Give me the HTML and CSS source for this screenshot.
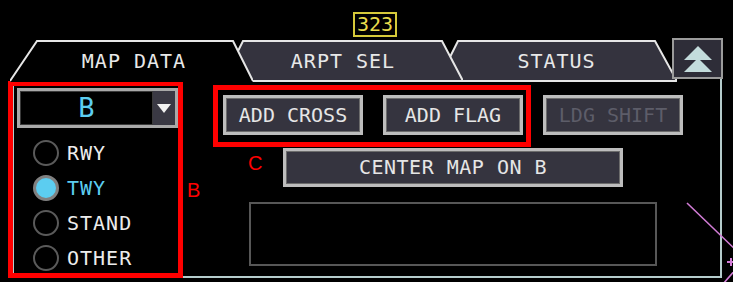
FILE: index.html
```html
<!DOCTYPE html>
<html lang="en">
<head>
<meta charset="utf-8">
<title>Map Data</title>
<link rel="stylesheet" href="styles.css">
</head>
<body>
<div class="screen">
  <div class="topbar"><span class="alt">323</span></div>

  <div class="tabbar">
    <div class="tab tab-active">
      <svg class="tab-shape" viewBox="0 0 243 42" preserveAspectRatio="none"><polygon points="0,42 27,1 223,1 243,42" fill="#000"/><polyline points="0,41 27,1 223,1 243,41" fill="none" stroke="#e6e6e6" stroke-width="2"/></svg>
      <span class="tab-label">MAP DATA</span>
    </div>
    <div class="tab tab-2">
      <svg class="tab-shape" viewBox="0 0 240 42" preserveAspectRatio="none"><polygon points="0,41 20,1 219,1 240,41" fill="#34333e" stroke="#e6e6e6" stroke-width="2"/></svg>
      <span class="tab-label">ARPT SEL</span>
    </div>
    <div class="tab tab-3">
      <svg class="tab-shape" viewBox="0 0 239 42" preserveAspectRatio="none"><polygon points="0,41 20,1 217,1 239,41" fill="#34333e" stroke="#e6e6e6" stroke-width="2"/></svg>
      <span class="tab-label">STATUS</span>
    </div>
    <div class="collapse">
      <svg width="28" height="26" viewBox="0 0 28 26"><polygon points="14,0 28,14 0,14" fill="#c3dcdc"/><polygon points="14,12 28,26 0,26" fill="#c3dcdc"/></svg>
    </div>
  </div>

  <div class="panel">
    <div class="left">
      <div class="dropdown">
        <div class="dd-value">B</div>
        <div class="dd-arrow"><span class="caret"></span></div>
      </div>
      <ul class="radios">
        <li class="radio"><span class="dot"></span><span class="radio-label">RWY</span></li>
        <li class="radio radio-on"><span class="dot"></span><span class="radio-label">TWY</span></li>
        <li class="radio"><span class="dot"></span><span class="radio-label">STAND</span></li>
        <li class="radio"><span class="dot"></span><span class="radio-label">OTHER</span></li>
      </ul>
    </div>
    <div class="right">
      <div class="btn-row">
        <div class="btn">ADD CROSS</div>
        <div class="btn">ADD FLAG</div>
        <div class="btn btn-disabled">LDG SHIFT</div>
      </div>
      <div class="btn btn-wide">CENTER MAP ON B</div>
      <div class="msgbox"></div>
    </div>
  </div>

  <svg class="map-overlay" width="733" height="282" viewBox="0 0 733 282">
    <line x1="687" y1="203" x2="740" y2="254" stroke="#d27cd6" stroke-width="1.6"/>
    <line x1="727" y1="262" x2="735" y2="262" stroke="#d27cd6" stroke-width="2"/>
    <line x1="731" y1="258" x2="731" y2="266" stroke="#d27cd6" stroke-width="2"/>
    <line x1="736" y1="269" x2="723" y2="284" stroke="#d27cd6" stroke-width="1.6"/>
  </svg>

  <div class="anno-box anno-a"></div>
  <div class="anno-box anno-b"></div>
  <div class="anno-box anno-c"></div>
  <span class="anno-label label-a">A</span>
  <span class="anno-label label-b">B</span>
  <span class="anno-label label-c">C</span>
</div>
</body>
</html>
```
FILE: styles.css
```css
html, body {
  margin: 0;
  padding: 0;
  background: #000;
}

.screen {
  position: relative;
  width: 733px;
  height: 282px;
  overflow: hidden;
  background: #000;
  font-family: "DejaVu Sans Mono", "Liberation Mono", monospace;
  color: #e6e6e6;
}

/* top altitude box */
.topbar {
  height: 38px;
  box-sizing: border-box;
  padding: 12px 0 0 353px;
}

.alt {
  display: block;
  width: 44px;
  height: 25px;
  box-sizing: border-box;
  border: 2px solid #d6c93a;
  color: #e8db4c;
  font-size: 20px;
  line-height: 21px;
  text-align: center;
}

/* tabs */
.tabbar {
  display: flex;
  align-items: flex-start;
  height: 44px;
}

.tab {
  position: relative;
  height: 42px;
  margin-top: 2px;
  display: flex;
  align-items: center;
  justify-content: center;
  box-sizing: border-box;
}

.tab-shape {
  position: absolute;
  left: 0;
  top: 0;
  width: 100%;
  height: 100%;
  z-index: -1;
}

.tab-label {
  font-size: 20px;
  letter-spacing: 1px;
  color: #e8e8e8;
  line-height: 1;
}

.tab-active {
  margin-left: 10px;
  width: 243px;
  padding-left: 5px;
  z-index: 3;
}

.tab-2 {
  margin-left: -30px;
  width: 240px;
  z-index: 2;
}

.tab-3 {
  margin-left: -25px;
  width: 239px;
  padding-right: 2px;
  z-index: 1;
}

.collapse {
  position: relative;
  z-index: 4;
  margin-left: -5px;
  width: 51px;
  height: 41px;
  box-sizing: border-box;
  border: 2px solid #9b9b9b;
  background: #2e2d38;
  display: flex;
  align-items: center;
  justify-content: center;
}

.collapse::after {
  content: "";
  position: absolute;
  left: 46px;
  top: 39px;
  width: 2px;
  height: 4px;
  background: #b5cccc;
}

/* panel */
.panel {
  margin-left: 12px;
  width: 710px;
  height: 196px;
  box-sizing: border-box;
  border: 2px solid #b5cccc;
  border-top: none;
  display: flex;
}

.left {
  width: 172px;
  padding: 6px 0 0 3px;
  box-sizing: border-box;
}

.dropdown {
  width: 161px;
  height: 40px;
  box-sizing: border-box;
  border: 3px solid #a9a9a9;
  display: flex;
  background: #000;
}

.dd-value {
  flex: 1;
  box-shadow: inset 0 0 0 1px #3a3a3a;
  color: #5ccdf0;
  font-size: 27px;
  line-height: 34px;
  text-align: center;
}

.dd-arrow {
  width: 22px;
  background: #3a3944;
  display: flex;
  align-items: center;
  justify-content: center;
}

.caret {
  width: 0;
  height: 0;
  border-left: 7px solid transparent;
  border-right: 7px solid transparent;
  border-top: 9px solid #f2f2f2;
}

.radios {
  list-style: none;
  margin: 7px 0 0 16px;
  padding: 0;
}

.radio {
  height: 35px;
  display: flex;
  align-items: center;
  gap: 8px;
}

.dot {
  width: 26px;
  height: 26px;
  box-sizing: border-box;
  border-radius: 50%;
  border: 2px solid #5a5a5a;
  background: #000;
}

.radio-on .dot {
  border: 3px solid #808080;
  background: #5ccdf0;
}

.radio-label {
  font-size: 20px;
  letter-spacing: 1px;
  color: #ececec;
  line-height: 1;
}

.radio-on .radio-label {
  color: #5ccdf0;
}

.right {
  flex: 1;
  display: flex;
  flex-direction: column;
  align-items: center;
  padding-top: 13px;
}

.btn-row {
  display: flex;
  gap: 20px;
}

.btn {
  width: 140px;
  height: 40px;
  box-sizing: border-box;
  border: 3px solid #bdbdbd;
  box-shadow: inset 0 0 0 1px #6c6c6c;
  background: #35343f;
  color: #e6e6e6;
  font-size: 20px;
  line-height: 34px;
  text-align: center;
}

.btn-disabled {
  color: #5d5d69;
}

.btn-wide {
  width: 340px;
  height: 39px;
  line-height: 33px;
  margin-top: 13px;
  letter-spacing: 0.5px;
}

.msgbox {
  width: 408px;
  height: 64px;
  margin-top: 15px;
  box-sizing: border-box;
  border: 2px solid #575757;
}

/* map overlay */
.map-overlay {
  position: absolute;
  left: 0;
  top: 0;
  pointer-events: none;
}

/* red annotations */
.anno-box {
  position: absolute;
  box-sizing: border-box;
  border: 5px solid #ff0000;
}

.anno-a {
  left: 68px;
  top: 40px;
  width: 131px;
  height: 42px;
}

.anno-b {
  left: 8px;
  top: 81px;
  width: 175px;
  height: 197px;
}

.anno-c {
  left: 213px;
  top: 85px;
  width: 318px;
  height: 62px;
}

.anno-label {
  position: absolute;
  font-family: "Liberation Sans", Arial, sans-serif;
  font-size: 20px;
  line-height: 1;
  color: #ff0000;
}

.label-a {
  left: 47px;
  top: 50px;
}

.label-b {
  left: 187px;
  top: 180px;
}

.label-c {
  left: 248px;
  top: 153px;
}
```
